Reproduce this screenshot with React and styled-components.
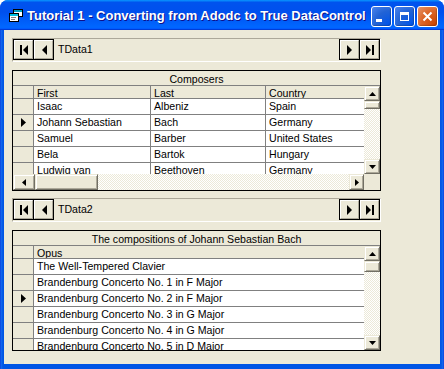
import React from 'react';
import styled, { createGlobalStyle } from 'styled-components';

const GlobalStyle = createGlobalStyle`
    html, body {
        margin: 0;
        padding: 0;
        background: #fff;
    }
    body {
        font-family: "Liberation Sans", Arial, sans-serif;
        font-size: 10.6px;
        color: #000;
    }
`;

const FACE = '#ECE9D8';
const SHADOW = '#ACA899';
const LINE = '#808080';

const composers = [
    ['Isaac', 'Albeniz', 'Spain'],
    ['Johann Sebastian', 'Bach', 'Germany'],
    ['Samuel', 'Barber', 'United States'],
    ['Bela', 'Bartok', 'Hungary'],
    ['Ludwig van', 'Beethoven', 'Germany'],
];

const opus = [
    ['The Well-Tempered Clavier'],
    ['Brandenburg Concerto No. 1 in F Major'],
    ['Brandenburg Concerto No. 2 in F Major'],
    ['Brandenburg Concerto No. 3 in G Major'],
    ['Brandenburg Concerto No. 4 in G Major'],
    ['Brandenburg Concerto No. 5 in D Major'],
];

function AppIcon() {
    return (
        <svg width="14" height="13" viewBox="0 0 14 13">
            <rect x="4.5" y="0.5" width="9" height="7" fill="#fff" stroke="#000" />
            <rect x="5" y="1" width="8" height="2" fill="#00a0c0" />
            <rect x="0.5" y="4.5" width="9" height="8" fill="#fff" stroke="#000" />
            <rect x="1" y="5" width="8" height="2" fill="#00c0e0" />
            <rect x="2" y="8" width="5" height="1" fill="#808080" />
            <rect x="2" y="10" width="4" height="1" fill="#808080" />
        </svg>
    );
}

function Arrow({ dir }) {
    if (dir === 'first') {
        return (
            <svg width="8" height="10" viewBox="0 0 8 10">
                <rect x="0" y="0" width="2" height="10" fill="#000" />
                <polygon points="8,0 3,5 8,10" fill="#000" />
            </svg>
        );
    }
    if (dir === 'prev') {
        return (
            <svg width="6" height="10" viewBox="0 0 6 10">
                <polygon points="6,0 1,5 6,10" fill="#000" />
            </svg>
        );
    }
    if (dir === 'next') {
        return (
            <svg width="6" height="10" viewBox="0 0 6 10">
                <polygon points="0,0 5,5 0,10" fill="#000" />
            </svg>
        );
    }
    return (
        <svg width="8" height="10" viewBox="0 0 8 10">
            <polygon points="0,0 5,5 0,10" fill="#000" />
            <rect x="6" y="0" width="2" height="10" fill="#000" />
        </svg>
    );
}

function SmallArrow({ dir }) {
    const pts = {
        up: '0,4 3.5,0 7,4',
        down: '0,0 3.5,4 7,0',
        left: '4,0 0,3.5 4,7',
        right: '0,0 4,3.5 0,7',
    }[dir];
    const vertical = dir === 'up' || dir === 'down';
    return (
        <svg width={vertical ? 7 : 4} height={vertical ? 4 : 7} viewBox={vertical ? '0 0 7 4' : '0 0 4 7'}>
            <polygon points={pts} fill="#000" />
        </svg>
    );
}

function NavBar({ label }) {
    return (
        <Nav>
            <NavGroup>
                <NavButton><Arrow dir="first" /></NavButton>
                <NavButton><Arrow dir="prev" /></NavButton>
            </NavGroup>
            <NavLabel>{label}</NavLabel>
            <NavGroup>
                <NavButton><Arrow dir="next" /></NavButton>
                <NavButton><Arrow dir="last" /></NavButton>
            </NavGroup>
        </Nav>
    );
}

function VScrollBar({ thumb }) {
    return (
        <VScroll>
            <ScrollButton $h={15}><SmallArrow dir="up" /></ScrollButton>
            <Thumb style={{ height: thumb }} />
            <Track />
            <ScrollButton $h={15}><SmallArrow dir="down" /></ScrollButton>
        </VScroll>
    );
}

function DataGrid({ caption, columns, headers, rows, current, hscroll, thumb }) {
    const template = ['21px', ...columns].join(' ');
    return (
        <GridBox>
            <Caption>{caption}</Caption>
            <Upper>
                <Cells>
                    <Row $cols={template} $header>
                        <Selector />
                        {headers.map((h) => (
                            <Cell key={h}>{h}</Cell>
                        ))}
                    </Row>
                    {rows.map((r, i) => (
                        <Row key={i} $cols={template}>
                            <Selector>
                                {i === current && (
                                    <svg width="5" height="9" viewBox="0 0 5 9">
                                        <polygon points="0,0 5,4.5 0,9" fill="#000" />
                                    </svg>
                                )}
                            </Selector>
                            {r.map((c, j) => (
                                <Cell key={j} $white>{c}</Cell>
                            ))}
                        </Row>
                    ))}
                </Cells>
                <VScrollBar thumb={thumb} />
            </Upper>
            {hscroll && (
                <HRow>
                    <HScroll>
                        <ScrollButton $w={22}><SmallArrow dir="left" /></ScrollButton>
                        <HThumb />
                        <Track />
                        <ScrollButton $w={15}><SmallArrow dir="right" /></ScrollButton>
                    </HScroll>
                    <Corner />
                </HRow>
            )}
        </GridBox>
    );
}

export default function App() {
    return (
        <>
            <GlobalStyle />
            <Window>
                <TitleBar>
                    <AppIcon />
                    <Title>Tutorial 1 - Converting from Adodc to True DataControl</Title>
                    <TitleButtons>
                        <TitleButton>
                            <MinGlyph />
                        </TitleButton>
                        <TitleButton>
                            <MaxGlyph />
                        </TitleButton>
                        <TitleButton $close>
                            <svg width="11" height="11" viewBox="0 0 11 11">
                                <path d="M1.5 1.5 L9.5 9.5 M9.5 1.5 L1.5 9.5" stroke="#fff" strokeWidth="2" />
                            </svg>
                        </TitleButton>
                    </TitleButtons>
                </TitleBar>
                <Client>
                    <NavBar label="TData1" />
                    <DataGrid
                        caption="Composers"
                        columns={['117px', '115px', '1fr']}
                        headers={['First', 'Last', 'Country']}
                        rows={composers}
                        current={1}
                        hscroll
                        thumb={8}
                    />
                    <Spacer />
                    <NavBar label="TData2" />
                    <DataGrid
                        caption="The compositions of Johann Sebastian Bach"
                        columns={['1fr']}
                        headers={['Opus']}
                        rows={opus}
                        current={2}
                        thumb={11}
                    />
                </Client>
            </Window>
        </>
    );
}

const Window = styled.div`
    width: 444px;
    height: 369px;
    box-sizing: border-box;
    display: flex;
    flex-direction: column;
    border-radius: 8px 8px 0 0;
    overflow: hidden;
    background: linear-gradient(to right, #0831d9 0, #166aee 1px, #0055e5 3px, #0055e5 calc(100% - 3px), #166aee calc(100% - 1px), #0831d9 100%);
`;

const TitleBar = styled.div`
    height: 30px;
    flex: none;
    display: flex;
    align-items: center;
    padding: 0 6px 0 9px;
    gap: 3px;
    background: linear-gradient(
        to bottom,
        #0997ff 0,
        #0053ee 8%,
        #0050ee 40%,
        #0066ff 88%,
        #0066ff 93%,
        #005bff 95%,
        #003dd7 96%,
        #003dd7 100%
    );
`;

const Title = styled.div`
    flex: 1;
    font-family: "Liberation Sans", Arial, sans-serif;
    font-weight: bold;
    font-size: 13px;
    color: #fff;
    text-shadow: 1px 1px #0f1089;
    white-space: nowrap;
    padding-left: 1px;
`;

const TitleButtons = styled.div`
    display: flex;
    gap: 2px;
    margin-top: 2px;
`;

const TitleButton = styled.div`
    width: 21px;
    height: 21px;
    box-sizing: border-box;
    border: 1px solid #fff;
    border-radius: 3px;
    display: flex;
    align-items: center;
    justify-content: center;
    position: relative;
    background: ${(p) =>
        p.$close
            ? 'radial-gradient(circle at 90% 90%, #cc4600 0%, #dc6527 55%, #e5946a 100%)'
            : 'radial-gradient(circle at 90% 90%, #0054e9 0%, #2263d5 55%, #4c84ee 100%)'};
    box-shadow: inset -1px -1px 1px rgba(0, 0, 0, 0.2);
`;

const MinGlyph = styled.div`
    width: 6px;
    height: 3px;
    background: #fff;
    margin: 8px 6px 0 0;
`;

const MaxGlyph = styled.div`
    width: 9px;
    height: 9px;
    box-sizing: border-box;
    border: 1px solid #fff;
    border-top-width: 3px;
`;

const Client = styled.div`
    flex: 1;
    margin: 0 4px 5px 4px;
    background: ${FACE};
    padding: 8px 0 0 8px;
    display: flex;
    flex-direction: column;
`;

const Spacer = styled.div`
    height: 7px;
    flex: none;
`;

const Nav = styled.div`
    width: 369px;
    height: 24px;
    box-sizing: border-box;
    border: 1px solid;
    border-color: ${SHADOW} #fff #fff ${SHADOW};
    display: flex;
    align-items: flex-start;
    flex: none;
`;

const NavGroup = styled.div`
    display: flex;
    gap: 1px;
    border: 1px solid #000;
    background: #000;
`;

const NavButton = styled.div`
    width: 19px;
    height: 19px;
    box-sizing: border-box;
    border: 1px solid;
    border-color: #fff ${SHADOW} ${SHADOW} #fff;
    background: ${FACE};
    display: flex;
    align-items: center;
    justify-content: center;
`;

const NavLabel = styled.div`
    flex: 1;
    padding-left: 4px;
    line-height: 21px;
`;

const GridBox = styled.div`
    width: 369px;
    height: 121px;
    box-sizing: border-box;
    border: 1px solid #000;
    background: ${FACE};
    display: flex;
    flex-direction: column;
    overflow: hidden;
    margin-top: 8px;
    flex: none;
`;

const Caption = styled.div`
    height: 15px;
    flex: none;
    box-sizing: border-box;
    border-bottom: 1px solid ${LINE};
    text-align: center;
    line-height: 16px;
    white-space: nowrap;
`;

const Upper = styled.div`
    flex: 1;
    min-height: 0;
    display: flex;
`;

const Cells = styled.div`
    flex: 1;
    min-width: 0;
    overflow: hidden;
    display: flex;
    flex-direction: column;
`;

const Row = styled.div`
    display: grid;
    grid-template-columns: ${(p) => p.$cols};
    height: ${(p) => (p.$header ? 13 : 16)}px;
    flex: none;
    line-height: ${(p) => (p.$header ? 14 : 15)}px;
`;

const Cell = styled.div`
    box-sizing: border-box;
    border-right: 1px solid ${LINE};
    border-bottom: 1px solid ${LINE};
    background: ${(p) => (p.$white ? '#fff' : FACE)};
    padding-left: 3px;
    white-space: nowrap;
    overflow: hidden;
    &:last-child {
        border-right: none;
    }
`;

const Selector = styled.div`
    box-sizing: border-box;
    border-right: 1px solid ${LINE};
    border-bottom: 1px solid ${LINE};
    background: ${FACE};
    display: flex;
    align-items: center;
    justify-content: center;
    padding-left: 1px;
`;

const hatch = `repeating-conic-gradient(#fff 0% 25%, ${FACE} 0% 50%) 0 0 / 2px 2px`;

const VScroll = styled.div`
    width: 16px;
    flex: none;
    display: flex;
    flex-direction: column;
`;

const ScrollButton = styled.div`
    flex: none;
    width: ${(p) => (p.$w ? `${p.$w}px` : 'auto')};
    height: ${(p) => (p.$h ? `${p.$h}px` : 'auto')};
    box-sizing: border-box;
    border: 1px solid;
    border-color: ${FACE} #716f64 #716f64 ${FACE};
    box-shadow: inset 1px 1px #fff, inset -1px -1px ${SHADOW};
    background: ${FACE};
    display: flex;
    align-items: center;
    justify-content: center;
`;

const Thumb = styled.div`
    flex: none;
    box-sizing: border-box;
    border: 1px solid;
    border-color: ${FACE} #716f64 #716f64 ${FACE};
    box-shadow: inset 1px 1px #fff, inset -1px -1px ${SHADOW};
    background: ${FACE};
`;

const HThumb = styled(Thumb)`
    width: 63px;
`;

const Track = styled.div`
    flex: 1;
    background: ${hatch};
`;

const HRow = styled.div`
    height: 16px;
    flex: none;
    display: flex;
`;

const HScroll = styled.div`
    flex: 1;
    display: flex;
`;

const Corner = styled.div`
    width: 16px;
    background: ${FACE};
`;
